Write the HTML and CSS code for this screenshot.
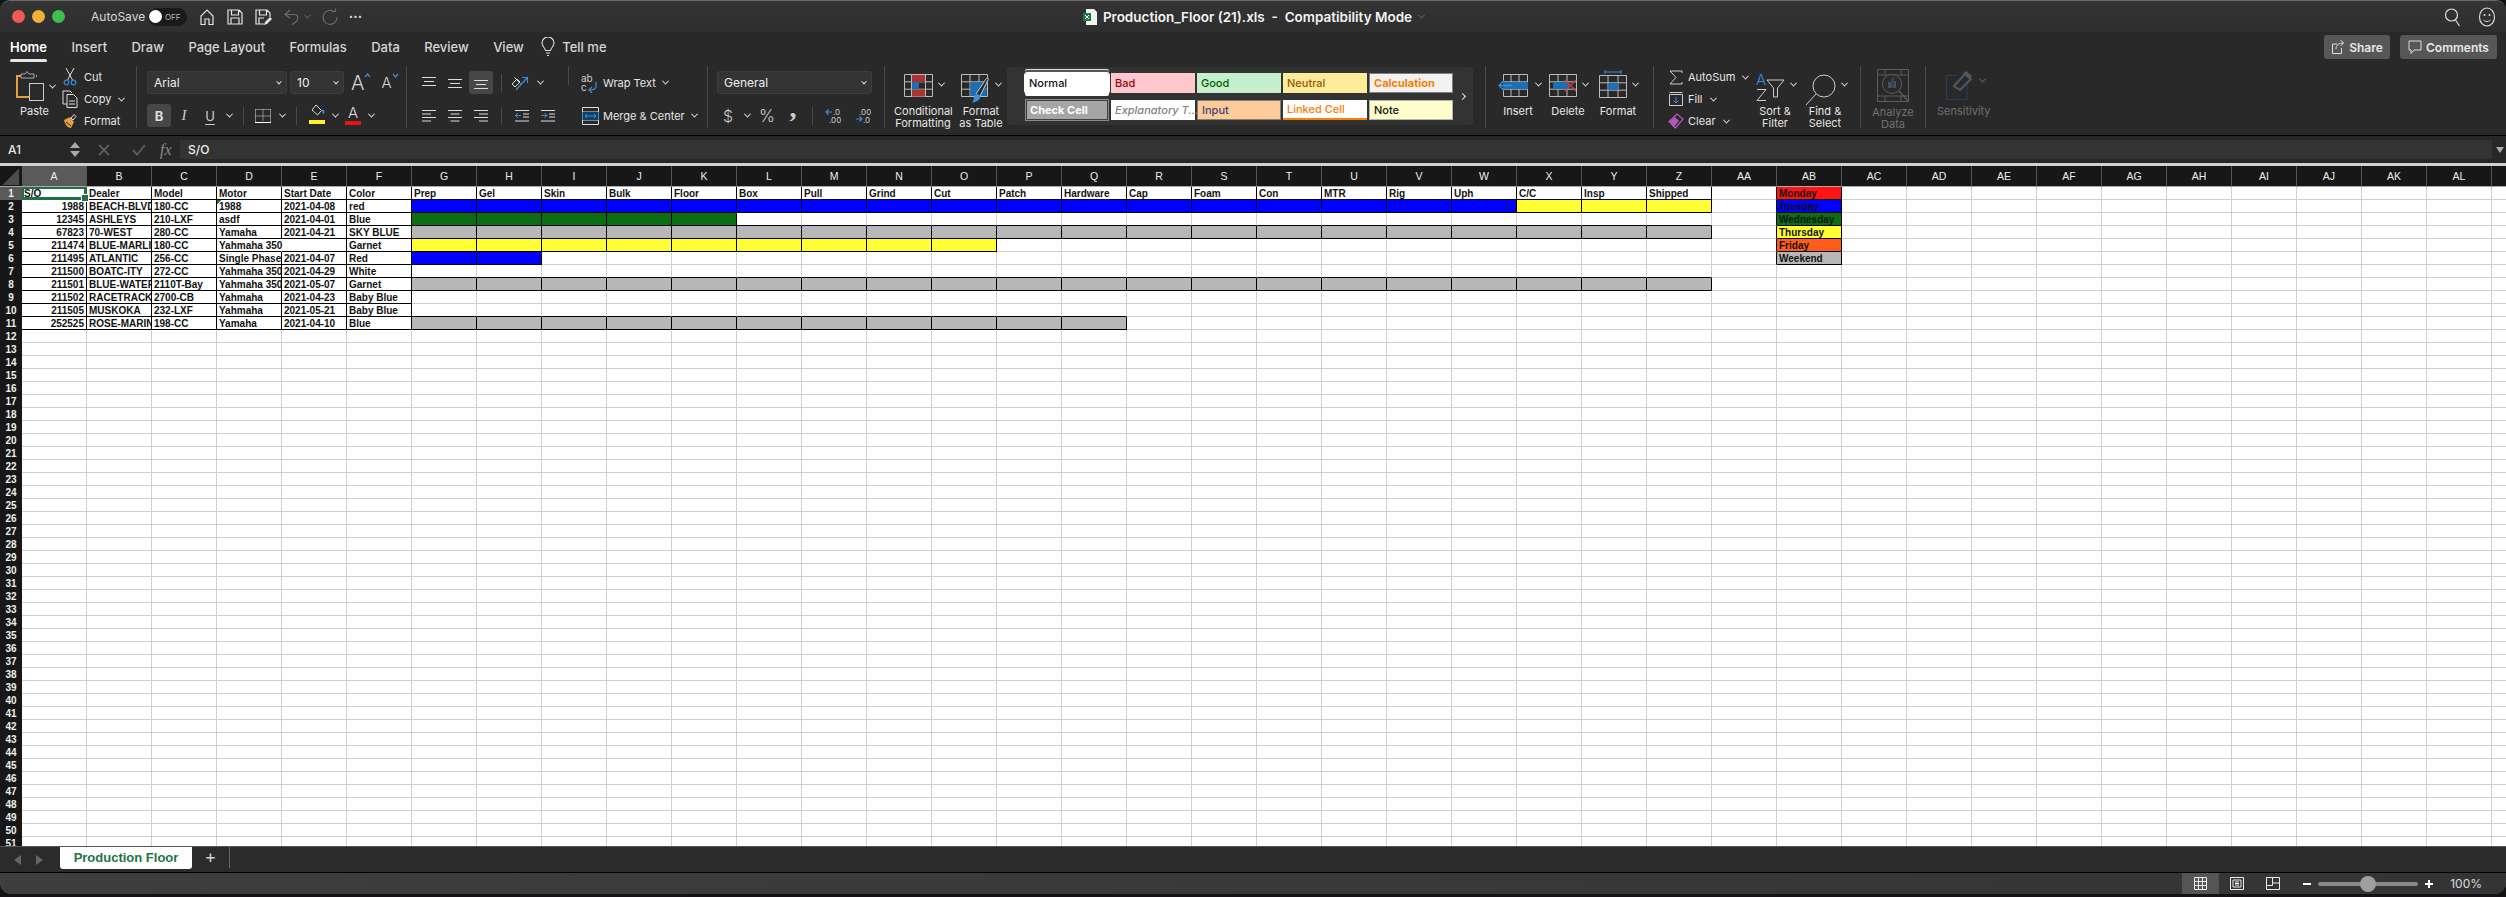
FILE: index.html
```html
<!DOCTYPE html>
<html lang="en">
<head>
  <meta charset="UTF-8">
  <title>Production_Floor (21).xls - Compatibility Mode</title>
  <link rel="stylesheet" href="styles.css">
  <script src="script.js" defer></script>
</head>
<body>
  <div class="window">

    <!-- title bar -->
    <header class="titlebar">
      <div class="title-left">
        <span class="light red"></span><span class="light amber"></span><span class="light green"></span>
        <span class="autosave">AutoSave</span>
        <span class="toggle"><i></i>OFF</span>
        <svg class="qa" width="18" height="18" viewBox="0 0 18 18"><path d="M3 16.500V8L9 2l6 6v8.500h-4V11H7v5.500z" fill="none" stroke="#e4e4e4" stroke-width="1.200"/></svg>
        <svg class="qa" width="18" height="18" viewBox="0 0 18 18"><path d="M2 2h11l3 3v11H2zM5.500 2v5h7V2M5 16v-6h8v6" fill="none" stroke="#e4e4e4" stroke-width="1.200"/></svg>
        <svg class="qa" width="18" height="18" viewBox="0 0 18 18"><path d="M10 16H2V2h11l3 3v4M5.500 2v5h7V2M5 16v-6h5" fill="none" stroke="#e4e4e4" stroke-width="1.200"/><path d="M10 17l1-3 5-5 2 2-5 5z" fill="#e4e4e4"/></svg>
        <svg class="qa undo" width="18" height="18" viewBox="0 0 18 18"><path d="M7 2L2 6.500 7 10M2.500 6.500H11c6 0 4.500 7-2 10" fill="none" stroke="#6b6b6b" stroke-width="1.200"/></svg>
        <span class="chev dim"></span>
        <svg class="qa redo" width="18" height="18" viewBox="0 0 18 18"><path d="M13.500 4A7 7 0 1 0 16 9M10.500 3.500h4v-3" fill="none" stroke="#6b6b6b" stroke-width="1.200"/></svg>
        <span class="dots">•••</span>
      </div>
      <div class="title-mid">
        <svg width="16" height="18" viewBox="0 0 16 18"><path d="M4 1h8l3 3v13H4z" fill="#f2f2f2"/><rect x="1" y="5" width="8" height="8" fill="#1d7a45"/><path d="M3 7l4 4M7 7l-4 4" stroke="#fff"/></svg>
        <span class="doc">Production_Floor (21).xls&nbsp; - &nbsp;Compatibility Mode</span>
        <span class="chev dim"></span>
      </div>
      <div class="title-right">
        <svg width="18" height="20" viewBox="0 0 18 20"><circle cx="7.500" cy="8" r="6" fill="none" stroke="#ddd" stroke-width="1.200"/><path d="M11.500 13l4 6" stroke="#ddd" stroke-width="1.200"/></svg>
        <svg width="18" height="22" viewBox="0 0 18 22"><ellipse cx="9" cy="11" rx="7.500" ry="9" fill="none" stroke="#ddd" stroke-width="1.200"/><circle cx="6.500" cy="9" r="1" fill="#ddd"/><circle cx="11.500" cy="9" r="1" fill="#ddd"/><path d="M5.500 14c2 2 5 2 7 0" fill="none" stroke="#ddd"/></svg>
      </div>
    </header>

    <!-- ribbon tabs -->
    <nav class="tabs">
      <span class="tab active">Home</span>
      <span class="tab">Insert</span>
      <span class="tab">Draw</span>
      <span class="tab">Page Layout</span>
      <span class="tab">Formulas</span>
      <span class="tab">Data</span>
      <span class="tab">Review</span>
      <span class="tab">View</span>
      <span class="tell">
        <svg width="14" height="20" viewBox="0 0 14 20"><path d="M4.500 13.500C4 10.500 1 9.500 1 6a6 6 0 0 1 12 0c0 3.500-3 4.500-3.500 7.500zM5 16h4M6 18.500h2" fill="none" stroke="#ddd" stroke-width="1.100"/></svg>
        Tell me
      </span>
      <span class="tab-actions">
        <button class="act share"><svg width="14" height="16" viewBox="0 0 14 16"><path d="M6 5H1.500v9.500h9V9M5 10c0-4 3-6 7.500-6M9.500 1l3 3-3 3" fill="none" stroke="#ddd"/></svg>Share</button>
        <button class="act comments"><svg width="14" height="16" viewBox="0 0 14 16"><path d="M1 2h12v9H6l-3 3.500V11H1z" fill="none" stroke="#ddd"/></svg>Comments</button>
      </span>
    </nav>

    <!-- ribbon -->
    <section class="ribbon">

      <div class="group g-clip">
        <div class="paste">
          <div class="paste-top">
            <svg width="30" height="31" viewBox="0 0 30 31"><path d="M5 5H1v21h13" fill="none" stroke="#e59f3e" stroke-width="2"/><path d="M21 5h-1" stroke="#e59f3e" stroke-width="2"/><path d="M5 7V3h4l2-2.500L13 3h5v4z" fill="#2a2a2a" stroke="#aaa"/><rect x="13.500" y="12.500" width="14" height="17" fill="#2a2a2a" stroke="#ccc"/></svg>
            <span class="chev"></span>
          </div>
          <span class="lbl">Paste</span>
        </div>
        <div class="clip-list">
          <div class="line"><svg width="16" height="18" viewBox="0 0 16 18"><path d="M4 0l6.500 12M12 0L5.500 12" stroke="#ddd" fill="none"/><circle cx="4.500" cy="14.500" r="2.300" fill="none" stroke="#2f87d0" stroke-width="1.300"/><circle cx="11.500" cy="14.500" r="2.300" fill="none" stroke="#2f87d0" stroke-width="1.300"/></svg><span>Cut</span></div>
          <div class="line"><svg width="16" height="18" viewBox="0 0 16 18"><path d="M5 14H1V1h7l2 2" fill="none" stroke="#ddd"/><path d="M5 4.500h6.500l3.500 3.500v9.500H5zM7 11h6M7 14h6" fill="#2a2a2a" stroke="#ddd"/></svg><span>Copy</span><span class="chev"></span></div>
          <div class="line"><svg width="16" height="16" viewBox="0 0 16 16"><path d="M9 5l3-3.500 2 2L11 7z" fill="none" stroke="#ddd"/><path d="M2 7l6-3 4 5-3 6c-3 0-6-3-7-8z" fill="#e59f3e"/><path d="M4 9l5 4" stroke="#2a2a2a"/></svg><span>Format</span></div>
        </div>
      </div>
      <i class="sep"></i>

      <div class="group g-font">
        <div class="row r1">
          <div class="box font-name">Arial<span class="chev"></span></div>
          <div class="box font-size">10<span class="chev"></span></div>
          <span class="grow"><b class="big">A</b><svg width="7" height="5" viewBox="0 0 7 5"><path d="M1 4l2.500-3L6 4" fill="none" stroke="#3a8fd6" stroke-width="1.200"/></svg></span>
          <span class="grow small"><b class="big">A</b><svg width="7" height="5" viewBox="0 0 7 5"><path d="M1 1l2.500 3L6 1" fill="none" stroke="#3a8fd6" stroke-width="1.200"/></svg></span>
        </div>
        <div class="row r2">
          <span class="tool on bold-btn">B</span>
          <span class="tool ital">I</span>
          <span class="tool under">U</span>
          <span class="chev-slot"><span class="chev"></span></span>
          <i class="isep m8"></i>
          <span class="tool ml6"><svg width="16" height="14" viewBox="0 0 16 14"><path d="M.500.500h15M.500.500v13M15.500.500v13M8 .500v12M.500 7h15" fill="none" stroke="#ddd" stroke-dasharray="1 1"/><path d="M0 13.500h16" stroke="#fff"/></svg></span>
          <span class="chev-slot"><span class="chev"></span></span>
          <i class="isep m8"></i>
          <span class="tool ml7 paint"><svg width="16" height="15" viewBox="0 0 16 15"><path d="M7 1l5.500 5.500-4 4.500-5.500-5z" fill="none" stroke="#ddd"/><path d="M13 6c2-1 3 3 1 4" fill="#3a8fd6" stroke="#3a8fd6"/></svg><i class="swatch y"></i></span>
          <span class="chev-slot n"><span class="chev"></span></span>
          <span class="tool paint letter">A<i class="swatch r"></i></span>
          <span class="chev-slot n"><span class="chev"></span></span>
        </div>
      </div>
      <i class="sep"></i>

      <div class="group g-align">
        <div class="row r1">
          <span class="tool"><svg class="lines" width="14" height="12" viewBox="0 0 14 12"><path d="M0 .500h14M2 4.500h10M0 8.500h14"/></svg></span>
          <span class="tool"><svg class="lines" width="14" height="12" viewBox="0 0 14 12"><path d="M0 2.500h14M2 6.500h10M0 10.500h14"/></svg></span>
          <span class="tool on ml1 w24"><svg class="lines" width="14" height="12" viewBox="0 0 14 12"><path d="M0 3.500h14M2 7.500h10M0 11.500h14"/></svg></span>
          <i class="isep m8"></i>
          <span class="tool ml6 w24"><svg width="18" height="16" viewBox="0 0 18 16"><path d="M1 9l5-5 3 3-5 5zM3.500 2.500l6 6" fill="none" stroke="#ddd"/><path d="M5 15L16 3M11 2.500h5.500V8" fill="none" stroke="#3a8fd6" stroke-width="1.200"/></svg></span>
          <span class="chev-slot ml2"><span class="chev"></span></span>
          <i class="isep short"></i>
          <span class="mini ml11"><svg width="20" height="20" viewBox="0 0 20 20"><text x="1" y="9" class="ab">ab</text><text x="1" y="18" class="ab">c</text><path d="M16 9v4c0 3-3 4-6 4M12 14l-3 3 3 3" fill="none" stroke="#3a8fd6" stroke-width="1.200"/></svg></span>
          <span class="txt">Wrap Text</span><span class="chev"></span>
        </div>
        <div class="row r2">
          <span class="tool"><svg class="lines" width="14" height="12" viewBox="0 0 14 12"><path d="M0 .500h14M0 4h9M0 7.500h14M0 11h9"/></svg></span>
          <span class="tool"><svg class="lines" width="14" height="12" viewBox="0 0 14 12"><path d="M0 .500h14M2.500 4h9M0 7.500h14M2.500 11h9"/></svg></span>
          <span class="tool"><svg class="lines" width="14" height="12" viewBox="0 0 14 12"><path d="M0 .500h14M5 4h9M0 7.500h14M5 11h9"/></svg></span>
          <i class="isep m7"></i>
          <span class="tool ml7"><svg width="14" height="12" viewBox="0 0 14 12"><path class="blue" d="M0 5.500h6M3 3L.500 5.500 3 8"/><path class="wht" d="M0 .500h14M8 4h6M8 7h6M0 11h14"/></svg></span>
          <span class="tool"><svg width="14" height="12" viewBox="0 0 14 12"><path class="blue" d="M0 5.500h6M3.500 3L6 5.500 3.500 8"/><path class="wht" d="M0 .500h14M8 4h6M8 7h6M0 11h14"/></svg></span>
          <span class="mini ml19"><svg width="17" height="18" viewBox="0 0 17 18"><path d="M.500.500h16v17H.500zM.500 5h16M.500 13h16" fill="none" stroke="#ddd"/><rect x="1" y="5" width="15" height="8" fill="#123f66"/><path d="M.500 5v8M16.500 5v8M3 9h11M5 7L3 9l2 2M12 7l2 2-2 2" fill="none" stroke="#3a8fd6"/></svg></span>
          <span class="txt ml3">Merge &amp; Center</span><span class="chev"></span>
        </div>
      </div>
      <i class="sep"></i>

      <div class="group g-num">
        <div class="row r1">
          <div class="box num-fmt">General<span class="chev"></span></div>
        </div>
        <div class="row r2">
          <span class="sym dollar">$</span>
          <span class="chev-slot ml3"><span class="chev"></span></span>
          <span class="sym pct">%</span>
          <span class="sym comma">,</span>
          <i class="isep m9"></i>
          <span class="tool dec ml7"><svg width="16" height="15" viewBox="0 0 16 15"><path d="M7 4H1M3.500 1.500L1 4l2.500 2.500" fill="none" stroke="#3a8fd6" stroke-width="1.100"/><text x="8" y="7" class="digits">.0</text><text x="4" y="14.500" class="digits">.00</text></svg></span>
          <span class="tool dec ml4"><svg width="16" height="15" viewBox="0 0 16 15"><text x="4" y="6.500" class="digits">.00</text><text x="8" y="14.500" class="digits">.0</text><path d="M1 11h6M4.500 8.500L7 11l-2.500 2.500" fill="none" stroke="#3a8fd6" stroke-width="1.100"/></svg></span>
        </div>
      </div>
      <i class="sep"></i>

      <div class="group g-styles">
        <div class="bigbtn w58 pl10">
          <div class="bigtop"><svg width="29" height="23" viewBox="0 0 29 23"><path d="M.500.500h28v22H.500zM.500 7.800h28M.500 15.200h28M7.500.500v22M14.500.500v22M21.500.500v22" fill="none" stroke="#bbb"/><rect x="8" y="1" width="13" height="7" fill="#a93232"/><rect x="8" y="8" width="7" height="7" fill="#1d6fb5"/><rect x="8" y="15.500" width="13" height="7" fill="#a93232"/></svg><span class="chev"></span></div>
          <span class="lbl">Conditional<br>Formatting</span>
        </div>
        <div class="bigbtn w50 pl5 tbl">
          <div class="bigtop"><svg width="29" height="30" viewBox="0 0 29 30"><path d="M.500.500h26v22H.500zM.500 7.800h26M.500 15.200h26M9 .500v22M18 .500v22" fill="none" stroke="#bbb"/><rect x="9.500" y="8" width="16" height="14" fill="#1d6fb5"/><path d="M15 20L25 5c1-2 3-1 2 1L19 22" fill="#2a2a2a" stroke="#ccc"/><path d="M14 21c3-2 6 0 5 3-1 3-5 4-8 5 2-2 1-5 3-8z" fill="#3a8fd6"/></svg><span class="chev"></span></div>
          <span class="lbl">Format<br>as Table</span>
        </div>
        <div class="gallery">
          <div class="cells">
            <span class="st normal">Normal</span>
            <span class="st bad">Bad</span>
            <span class="st good">Good</span>
            <span class="st neutral">Neutral</span>
            <span class="st calc">Calculation</span>
            <span class="st check"><em>Check Cell</em></span>
            <span class="st expl">Explanatory T...</span>
            <span class="st input">Input</span>
            <span class="st linked">Linked Cell</span>
            <span class="st note">Note</span>
          </div>
          <span class="chev side"></span>
        </div>
      </div>
      <i class="sep"></i>

      <div class="group g-cells">
        <div class="bigbtn w50 pl5">
          <div class="bigtop"><svg width="32" height="23" viewBox="0 0 32 23"><path d="M5.500.500h24v22h-24zM5.500 7.800h24M5.500 15.200h24M13 .500v22M21 .500v22" fill="none" stroke="#bbb"/><rect x="5" y="8" width="25" height="7" fill="#1d6fb5"/><path d="M14 11.500H1M6 6.500l-5 5 5 5" fill="none" stroke="#3a8fd6" stroke-width="1.300"/></svg><span class="chev"></span></div>
          <span class="lbl">Insert</span>
        </div>
        <div class="bigbtn w50 pl6">
          <div class="bigtop"><svg width="28" height="23" viewBox="0 0 28 23"><path d="M.500.500h27v22H.500zM.500 7.800h27M.500 15.200h27M9 .500v22M18 .500v22" fill="none" stroke="#bbb"/><rect x="4" y="8" width="16" height="7" fill="#1d6fb5"/><path d="M16 6l11 11M27 6L16 17" stroke="#d33b3b" stroke-width="1.300"/></svg><span class="chev"></span></div>
          <span class="lbl">Delete</span>
        </div>
        <div class="bigbtn w50 pl6">
          <div class="bigtop shift"><svg width="28" height="29" viewBox="0 0 28 29"><path d="M6 1v4M22 1v4M6 3h16" stroke="#3a8fd6" fill="none"/><path d="M.500 6.500h27v22H.500zM.500 13.800h27M.500 21.200h27M9 6.500v22M19 6.500v22" fill="none" stroke="#bbb"/><rect x="9.500" y="14" width="9.500" height="7" fill="#1d6fb5"/></svg><span class="chev"></span></div>
          <span class="lbl">Format</span>
        </div>
      </div>
      <i class="sep"></i>

      <div class="group g-edit">
        <div class="edit-list">
          <div class="line"><svg width="14" height="15" viewBox="0 0 14 15"><path d="M13 3V1H1l6 6.500L1 14h12v-2" fill="none" stroke="#ccc"/></svg><span>AutoSum</span><span class="chev"></span></div>
          <div class="line"><svg width="14" height="14" viewBox="0 0 14 14"><path d="M.500 2.500h13v11H.500zM.500 .500h13" fill="none" stroke="#ccc"/><path d="M7 5v6M4.500 8.500L7 11l2.500-2.500" fill="none" stroke="#3a8fd6"/></svg><span>Fill</span><span class="chev"></span></div>
          <div class="line"><svg width="16" height="16" viewBox="0 0 16 16"><path d="M1 8.500L9 1l6 5-7.500 9z" fill="none" stroke="#b556b8" stroke-width="1.200"/><path d="M1.500 8.500l4 6 5.500-6.500-4-4z" fill="#b556b8"/></svg><span>Clear</span><span class="chev"></span></div>
        </div>
        <div class="bigbtn w46 pl4">
          <div class="bigtop"><svg width="29" height="28" viewBox="0 0 29 28"><text x="0" y="11" class="sort-a">A</text><path d="M1 15.500h9L1 26.500h9" fill="none" stroke="#ccc"/><path d="M11 6h17l-6.500 8v9h-4v-9z" fill="none" stroke="#ccc"/></svg><span class="chev"></span></div>
          <span class="lbl">Sort &amp;<br>Filter</span>
        </div>
        <div class="bigbtn w54 pl7">
          <div class="bigtop"><svg width="31" height="32" viewBox="0 0 31 32"><circle cx="19" cy="12" r="11" fill="none" stroke="#ccc"/><path d="M11 20L1 31" stroke="#ccc"/></svg><span class="chev"></span></div>
          <span class="lbl">Find &amp;<br>Select</span>
        </div>
      </div>
      <i class="sep"></i>

      <div class="group g-analyze">
        <svg class="ana" width="32" height="33" viewBox="0 0 32 33"><path d="M.500.500h31v32H.500zM.500 6h31M.500 27h31M8 .500v6M24 .500v6M8 27v5.500M24 27v5.500" fill="none" stroke="#5d5d5d"/><circle cx="15" cy="15" r="9.500" fill="#2a2a2a" stroke="#5d5d5d"/><rect x="11" y="13" width="3" height="6" fill="#4f4f4f"/><rect x="14" y="9" width="3" height="10" fill="#24486a"/><rect x="17" y="12" width="2" height="7" fill="#4f4f4f"/><path d="M22 22l9 10" stroke="#5d5d5d" stroke-width="1.300"/></svg>
        <span class="lbl off">Analyze<br>Data</span>
      </div>
      <i class="sep"></i>

      <div class="group g-sens">
        <div class="bigbtn w52 pl9">
          <div class="bigtop shift2"><svg width="28" height="30" viewBox="0 0 28 30"><path d="M21 15v14.500H.500V5.500H11" fill="none" stroke="#22445f"/><path d="M8 16l11-12 6 5-11 11z" fill="none" stroke="#4c5962" stroke-width="2"/><path d="M17 4l3-3 6 5-3 3" fill="#4c5962"/></svg><span class="chev dim"></span></div>
          <span class="lbl off">Sensitivity</span>
        </div>
      </div>
    </section>

    <!-- formula bar -->
    <div class="formula">
      <span class="namebox">A1</span>
      <span class="stepper"><i class="up"></i><i class="dn"></i></span>
      <span class="fbtn"><svg width="12" height="12" viewBox="0 0 12 12"><path d="M1 1l10 10M11 1L1 11" stroke="#5d5d5d" stroke-width="1.800"/></svg></span>
      <span class="fbtn w30"><svg width="14" height="12" viewBox="0 0 14 12"><path d="M1 6l4 4.500L13 1" fill="none" stroke="#5d5d5d" stroke-width="1.800"/></svg></span>
      <span class="fx">fx</span>
      <div class="ffield">S/O</div>
      <i class="fmore"></i>
    </div>

    <!-- sheet, cells are built in script.js -->
    <div class="sheet"><div class="grid" id="grid"></div></div>

    <!-- sheet tabs -->
    <div class="sheetbar">
      <span class="nav"><i class="left"></i><i class="right"></i></span>
      <span class="sheet-tab">Production Floor</span>
      <span class="add">+</span>
    </div>

    <!-- status bar -->
    <footer class="status">
      <span class="view on"><svg width="13" height="13" viewBox="0 0 13 13"><path d="M.500.500h12v12H.500zM.500 4.500h12M.500 8.500h12M4.500.500v12M8.500.500v12" fill="none" stroke="#eee"/></svg></span>
      <span class="view"><svg width="14" height="13" viewBox="0 0 14 13"><path d="M.500.500h13v12H.500zM3 3h8v7H3zM5 5h4M5 6.500h4M5 8h4" fill="none" stroke="#eee"/></svg></span>
      <span class="view"><svg width="14" height="13" viewBox="0 0 14 13"><path d="M.500.500h13v12H.500zM.500 8.500h6V.500M6.500 6h7" fill="none" stroke="#eee"/></svg></span>
      <span class="zoom-btn minus"></span>
      <span class="slider"><i></i></span>
      <span class="zoom-btn plus"></span>
      <span class="pct-val">100%</span>
    </footer>
  </div>
</body>
</html>
```

FILE: styles.css
```css
* {
  box-sizing: border-box;
}
html, body {
  margin: 0;
  height: 897px;
  overflow: hidden;
  background: #141216;
}
body {
  font-family: "Inter", "Liberation Sans", sans-serif;
  color: #e6e6e6;
}
.window {
  width: 2506px;
  height: 894px;
  display: flex;
  flex-direction: column;
  overflow: hidden;
  border-radius: 10px 10px 11px 11px;
  background: #292929;
  border-top: 1px solid #6a6a6a;
}
svg {
  display: block;
  flex: none;
}

/* chevron used all over the ribbon */
.chev {
  display: inline-block;
  flex: none;
  width: 5px;
  height: 5px;
  border-right: 1.5px solid #e6e6e6;
  border-bottom: 1.5px solid #e6e6e6;
  transform: rotate(45deg) translate(-1px, -1px);
}
.chev.dim {
  border-color: #666;
}
.chev-slot {
  width: 12px;
  display: flex;
  justify-content: center;
  flex: none;
}
.chev-slot.n {
  width: 10px;
}

/* title bar */
.titlebar {
  height: 31px;
  flex: none;
  display: grid;
  grid-template-columns: 1fr auto 1fr;
  align-items: center;
  background: linear-gradient(#343434, #2e2e2e);
}
.title-left {
  display: flex;
  align-items: center;
  padding-left: 12px;
}
.light {
  width: 13px;
  height: 13px;
  border-radius: 50%;
  margin-right: 7px;
}
.light.red { background: #ee5a55; }
.light.amber { background: #f0b03a; }
.light.green { background: #3cbf4b; }
.autosave {
  margin-left: 19px;
  font-size: 12px;
  color: #d8d8d8;
  width: 57px;
}
.toggle {
  width: 39px;
  height: 18px;
  border-radius: 9px;
  background: #1a1a1a;
  display: flex;
  align-items: center;
  font-size: 8px;
  color: #b5b5b5;
}
.toggle i {
  width: 13px;
  height: 13px;
  border-radius: 50%;
  background: #fff;
  margin: 0 3px 0 1px;
}
.qa {
  margin-left: 10px;
}
.title-left .qa:first-of-type {
  margin-left: 11px;
}
.qa.undo {
  margin-left: 11px;
}
.title-left .chev.dim {
  margin-left: 4px;
  border-width: 1.2px;
}
.qa.redo {
  margin-left: 11px;
}
.dots {
  margin-left: 10px;
  font-size: 7px;
  letter-spacing: 0.5px;
  color: #ddd;
}
.title-mid {
  display: flex;
  align-items: center;
  gap: 5px;
}
.doc {
  font-size: 13.500px;
  font-weight: 600;
  color: #f4f4f4;
  white-space: pre;
}
.title-mid .chev {
  margin-left: 2px;
}
.title-right {
  display: flex;
  justify-content: flex-end;
  align-items: center;
  gap: 16px;
  padding-right: 10px;
}

/* tabs */
.tabs {
  height: 30px;
  flex: none;
  display: flex;
  align-items: center;
  padding: 0 9px 0 10px;
  gap: 24.4px;
  background: #292929;
  font-size: 13px;
  font-weight: 500;
  color: #d6d6d6;
}
.tab {
  position: relative;
  line-height: 28px;
}
.tab.active {
  color: #fff;
  font-weight: 600;
}
.tab.active::after {
  content: "";
  display: block;
  height: 3px;
  border-radius: 2px;
  background: #e6e6e6;
  margin-top: -2px;
}
.tell {
  display: flex;
  align-items: center;
  gap: 7px;
  margin-left: -7px;
}
.tab-actions {
  margin-left: auto;
  display: flex;
  gap: 10px;
  margin-right: 0;
}
.act {
  height: 24px;
  border: 0;
  border-radius: 3px;
  background: #575757;
  color: #e8e8e8;
  font: 600 12px "Inter", sans-serif;
  display: flex;
  align-items: center;
  justify-content: center;
  gap: 4px;
  padding: 0;
}
.act.share { width: 66px; }
.act.comments { width: 97px; }

/* ribbon */
.ribbon {
  height: 74px;
  flex: none;
  display: flex;
  background: #292929;
  border-bottom: 1px solid #000;
  font-size: 11px;
}
.group {
  flex: none;
  display: flex;
  height: 73px;
}
.sep {
  flex: none;
  width: 1px;
  height: 62px;
  margin-top: 4px;
  background: #4a4a4a;
}
.isep {
  flex: none;
  width: 1px;
  height: 18px;
  background: #4a4a4a;
}
.isep.m8 { margin: 0 0 0 8px; }
.isep.m7 { margin: 0 0 0 7px; }
.isep.m9 { margin: 0 0 0 9px; }
.isep.short {
  margin: -5px 0 0 22px;
  height: 19px;
  align-self: flex-start;
}
.ml1 { margin-left: 1px; }
.ml2 { margin-left: 2px; }
.ml3 { margin-left: 3px; }
.ml4 { margin-left: 4px; }
.ml6 { margin-left: 6px; }
.ml7 { margin-left: 7px; }
.ml11 { margin-left: 11px; }
.ml19 { margin-left: 19px; }
.lbl {
  display: block;
  line-height: 12px;
  text-align: center;
  color: #e6e6e6;
  white-space: nowrap;
}
.lbl.off {
  color: #707070;
}
.line {
  height: 22px;
  display: flex;
  align-items: center;
  font-size: 11px;
  white-space: nowrap;
}

/* clipboard */
.g-clip {
  width: 136px;
}
.paste {
  width: 56px;
  padding: 9px 0 0 16px;
}
.paste-top {
  height: 34px;
  display: flex;
  align-items: flex-start;
}
.paste-top .chev {
  margin: 13px 0 0 4px;
}
.paste .lbl {
  width: 37px;
  line-height: 12px;
  margin-top: 0;
}
.clip-list {
  padding-top: 4px;
}
.clip-list svg {
  margin: 0 6px 0 6px;
}
.clip-list .chev {
  margin-left: 8px;
}

/* rows of the small ribbon controls */
.row {
  display: flex;
  align-items: center;
  height: 23px;
}
.row.r1 {
  margin-top: 9px;
}
.row.r2 {
  margin-top: 10px;
}
.group.g-font,
.group.g-align,
.group.g-num {
  flex-direction: column;
}
.g-font {
  width: 269px;
  padding-left: 10px;
}
.box {
  height: 23px;
  background: #343434;
  border: 1px solid #3d3d3d;
  border-radius: 3px;
  display: flex;
  align-items: center;
  justify-content: space-between;
  padding: 0 5px 0 6px;
  font-size: 12px;
  color: #eee;
}
.box .chev {
  width: 4px;
  height: 4px;
  border-width: 1.2px;
}
.font-name { width: 140px; }
.font-size { width: 54px; margin-left: 3px; }
.grow {
  display: flex;
  align-items: flex-start;
  margin-left: 7px;
}
.grow.small {
  margin-left: 10px;
}
.big {
  font-weight: 300;
  font-size: 20px;
  line-height: 20px;
  color: #d5d5d5;
}
.small .big {
  font-size: 15px;
}
.tool {
  flex: none;
  width: 26px;
  height: 23px;
  display: flex;
  align-items: center;
  justify-content: center;
  border-radius: 3px;
}
.tool.on {
  background: #474747;
}
.w24 {
  width: 24px;
}
.bold-btn {
  width: 24px;
  font-weight: 700;
  font-size: 13px;
  color: #ddd;
}
.ital {
  font: italic 15px "Liberation Serif", serif;
  color: #ccc;
}
.under {
  font-size: 13px;
  text-decoration: underline;
  text-underline-offset: 3px;
  color: #ccc;
}
.paint {
  position: relative;
  flex-direction: column;
  justify-content: flex-start;
}
.letter {
  font-size: 15px;
  line-height: 15px;
  font-weight: 300;
  color: #ddd;
  padding-top: 1px;
}
.swatch {
  width: 16px;
  height: 4px;
  margin-top: 1px;
}
.swatch.y { background: #fff12a; }
.swatch.r { background: #e6141a; }
.lines path {
  fill: none;
  stroke: #dcdcdc;
}
.blue {
  fill: none;
  stroke: #3a8fd6;
}
.wht {
  fill: none;
  stroke: #dcdcdc;
}

/* alignment */
.g-align {
  width: 300px;
  padding-left: 9px;
}
.mini {
  flex: none;
  width: 20px;
  display: flex;
  justify-content: center;
}
.ab {
  font-size: 10px;
  fill: #ccc;
}
.txt {
  font-size: 11px;
  white-space: nowrap;
  margin: 0 7px 0 3px;
}

/* number */
.g-num {
  width: 176px;
  padding-left: 9px;
}
.num-fmt { width: 155px; }
.sym {
  flex: none;
  text-align: center;
  color: #ccc;
  font-weight: 300;
}
.dollar {
  width: 20px;
  font-size: 16px;
  margin-left: 1px;
}
.pct {
  width: 24px;
  font-size: 17px;
  margin-left: 2px;
}
.comma {
  width: 20px;
  font: 700 28px/12px "Liberation Serif", serif;
  transform: translateY(-8px);
  margin-left: 4px;
}
.digits {
  font-size: 8px;
  fill: #ccc;
}

/* big buttons */
.bigbtn {
  flex: none;
  padding-top: 12px;
}
.bigtop {
  height: 31px;
  display: flex;
  align-items: flex-start;
  gap: 6px;
}
.bigtop .chev {
  margin-top: 8px;
}
.bigtop.shift {
  margin-top: -5px;
  height: 36px;
}
.bigtop.shift .chev {
  margin-top: 13px;
}
.bigtop.shift2 {
  margin-top: -4px;
  height: 35px;
}
.w46 { width: 46px; }
.w50 { width: 50px; }
.w52 { width: 52px; }
.w54 { width: 54px; }
.w58 { width: 58px; }
.pl4 { padding-left: 4px; }
.pl5 { padding-left: 5px; }
.pl6 { padding-left: 6px; }
.pl7 { padding-left: 7px; }
.pl9 { padding-left: 9px; }
.pl10 { padding-left: 10px; }
.pl4 .lbl { margin-left: -4px; }
.pl5 .lbl { margin-left: -5px; }
.pl6 .lbl { margin-left: -6px; }
.pl7 .lbl { margin-left: -7px; }
.pl9 .lbl { margin-left: -9px; }
.pl10 .lbl { margin-left: -10px; }

/* cell styles */
.g-styles {
  width: 600px;
  padding-left: 9px;
}
.bigbtn.tbl {
  margin-left: 4px;
}
.gallery {
  width: 466px;
  height: 58px;
  margin: 5px 0 0 1px;
  background: #333;
  border-radius: 3px;
  display: flex;
  align-items: center;
  padding-left: 18px;
}
.cells {
  display: grid;
  grid-template-columns: repeat(5, 84px);
  grid-auto-rows: 20px;
  column-gap: 2px;
  row-gap: 7px;
}
.st {
  display: flex;
  align-items: center;
  padding-left: 4px;
  font-size: 11px;
  white-space: nowrap;
  font-weight: 500;
}
.normal {
  background: #fff;
  color: #111;
  outline: 1px solid #fff;
  box-shadow: 0 -3px 0 #555, 0 -4px 0 #ddd, 0 3px 0 #fff;
  border-radius: 2px;
}
.bad { background: #ffc7ce; color: #9c0006; }
.good { background: #c6efce; color: #006100; }
.neutral { background: #ffeb9c; color: #9c5700; }
.calc { background: #f2f2f2; color: #fa7d00; border: 1px solid #7f7f7f; font-weight: 700; }
.check { background: #333; padding: 0; }
.check em {
  display: flex;
  align-items: center;
  padding-left: 3px;
  margin-left: 1px;
  width: 82px;
  height: 100%;
  background: #a5a5a5;
  border: 1px solid #3f3f3f;
  outline: 1px solid #8a8a8a;
  font-style: normal;
  font-weight: 700;
  color: #fff;
}
.expl { background: #fff; color: #7f7f7f; font-style: italic; }
.input { background: #ffcc99; color: #3f3f76; border: 1px solid #7f7f7f; }
.linked { background: #fff; color: #fa7d00; border-bottom: 2px solid #ff8001; }
.note { background: #ffffcc; color: #111; border: 1px solid #b2b2b2; }
.chev.side {
  margin: 0 0 0 7px;
  transform: rotate(-45deg);
  width: 5px;
  height: 5px;
}

/* cells + editing */
.g-cells {
  width: 167px;
  padding-left: 7px;
}
.g-edit {
  width: 206px;
  padding-left: 11px;
}
.edit-list {
  width: 87px;
  flex: none;
  padding-top: 4px;
}
.edit-list svg {
  margin: 0 4px 0 3px;
  width: 16px;
}
.edit-list .chev {
  margin-left: 8px;
}
.sort-a {
  font-size: 15px;
  font-weight: 300;
  fill: #3a8fd6;
}
.g-analyze {
  width: 64px;
  flex-direction: column;
  align-items: center;
  padding-top: 7px;
}
.g-analyze .lbl {
  margin-top: 4px;
}
.g-sens {
  padding-left: 11px;
}

/* formula bar */
.formula {
  height: 30px;
  flex: none;
  display: flex;
  align-items: center;
  background: #272727;
  border-bottom: 3px solid;
  border-image: linear-gradient(#555 0 1px, #d0d0d0 1px 3px) 3;
  font-size: 12px;
}
.namebox {
  width: 66px;
  padding-left: 8px;
  color: #e8e8e8;
  font-weight: 500;
}
.stepper {
  width: 18px;
  display: flex;
  flex-direction: column;
  align-items: center;
  gap: 3px;
}
.stepper i {
  width: 0;
  height: 0;
  border-left: 5px solid transparent;
  border-right: 5px solid transparent;
}
.stepper .up { border-bottom: 6px solid #aaa; }
.stepper .dn { border-top: 6px solid #aaa; }
.fbtn {
  width: 20px;
  display: flex;
  justify-content: flex-end;
  margin-left: 6px;
}
.fbtn.w30 {
  width: 30px;
}
.fx {
  width: 22px;
  margin-left: 14px;
  font: italic 16px "Liberation Serif", serif;
  color: #8a8a8a;
}
.ffield {
  width: 2312px;
  height: 19px;
  margin-left: -2px;
  padding-left: 8px;
  line-height: 19px;
  background: #333;
  color: #eee;
  font-weight: 500;
}
.fmore {
  width: 0;
  height: 0;
  margin-left: 4px;
  border-left: 4px solid transparent;
  border-right: 4px solid transparent;
  border-top: 6px solid #aaa;
}

/* sheet */
.sheet {
  flex: 1;
  min-height: 0;
  overflow: hidden;
  background: #fff;
}
.grid {
  display: grid;
  grid-template-columns: 22px repeat(39, 65px);
  grid-template-rows: 21px;
  grid-auto-rows: 13px;
}
.corner,
.colh,
.rowh {
  background: #171717;
  color: #eee;
  display: flex;
  align-items: center;
  justify-content: center;
  font-family: "Liberation Sans", sans-serif;
}
.corner {
  border-bottom: 1px solid #aaa;
  background: linear-gradient(135deg, #171717 52%, #4c4c4c 52%);
  background-size: 17px 17px;
  background-repeat: no-repeat;
  background-position: 2px 2px;
  background-color: #171717;
}
.colh {
  font-size: 10.500px;
  border-right: 1px solid #555;
  border-bottom: 1px solid #aaa;
}
.rowh {
  font-size: 10px;
  font-weight: 700;
  line-height: 12px;
}
.colh.sel,
.rowh.sel {
  background: #5a5a5a;
}
.cell {
  font: 700 10px/13px "Liberation Sans", sans-serif;
  color: #111;
  padding: 0 0 0 2px;
  overflow: hidden;
  white-space: nowrap;
  background: #fff;
  border-right: 1px solid #d0d0d0;
  border-bottom: 1px solid #d0d0d0;
}
.cell.num {
  text-align: right;
  padding-right: 2px;
}
.cell.br {
  border-right-color: #000;
}
.cell.bb {
  border-bottom-color: #000;
}
.cell.spill {
  overflow: visible;
  border-right-color: transparent;
  position: relative;
  z-index: 1;
  background: none;
}
.cell.flag {
  background: linear-gradient(135deg, #1e7145 3px, #fff 3px);
}
.cell.active {
  position: relative;
  overflow: visible;
  z-index: 2;
  box-shadow: inset 0 0 0 2px #1e7145;
  border-color: #1e7145;
}
.cell.active::after {
  content: "";
  position: absolute;
  right: -3px;
  bottom: -3px;
  width: 6px;
  height: 6px;
  background: #1e7145;
  border: 1px solid #fff;
}
.blue-fill { background: #0000ff; }
.green-fill { background: #0c6e14; }
.grey-fill { background: #b7b7b7; }
.yellow-fill { background: #ffff33; }
.red-fill { background: #ff1414; }
.orange-fill { background: #ff5c1c; }

/* sheet tabs */
.sheetbar {
  height: 27px;
  flex: none;
  display: flex;
  background: #2b2b2b;
  border-top: 1px solid #555;
  border-bottom: 1px solid #000;
}
.nav {
  width: 60px;
  display: flex;
  align-items: center;
  padding-left: 14px;
  gap: 15px;
}
.nav i {
  width: 0;
  height: 0;
  border-top: 5px solid transparent;
  border-bottom: 5px solid transparent;
}
.nav .left { border-right: 7px solid #666; }
.nav .right { border-left: 7px solid #666; }
.sheet-tab {
  width: 132px;
  height: 22px;
  background: #fff;
  color: #217346;
  border-radius: 0 0 3px 3px;
  font: 700 13px/21px "Liberation Sans", sans-serif;
  text-align: center;
}
.add {
  width: 38px;
  height: 21px;
  border-right: 1px solid #666;
  color: #ccc;
  font-size: 18px;
  line-height: 19px;
  text-align: center;
}

/* status bar */
.status {
  height: 21px;
  flex: none;
  display: flex;
  align-items: center;
  justify-content: flex-end;
  background: linear-gradient(90deg, #3e3e3e, #343434);
  padding-right: 24px;
  font-size: 12px;
}
.view {
  width: 36px;
  height: 21px;
  display: flex;
  align-items: center;
  justify-content: center;
}
.view.on {
  background: #555;
  width: 37px;
}
.zoom-btn {
  width: 8px;
  height: 2px;
  background: #fff;
  margin-left: 12px;
  position: relative;
}
.zoom-btn.plus::after {
  content: "";
  position: absolute;
  left: 3px;
  top: -3px;
  width: 2px;
  height: 8px;
  background: #fff;
}
.slider {
  width: 100px;
  height: 4px;
  border-radius: 2px;
  background: #888;
  margin-left: 7px;
  position: relative;
}
.slider i {
  position: absolute;
  left: 42px;
  top: -6px;
  width: 16px;
  height: 16px;
  border-radius: 50%;
  background: #9f9f9f;
}
.zoom-btn.plus {
  margin-left: 7px;
}
.pct-val {
  margin-left: 17px;
  color: #ddd;
}
```

FILE: script.js
```js
// Builds the worksheet: headers, cell text and the coloured schedule bars.
const NUM_COLS = 39;
const NUM_ROWS = 51;

const sheet = [
  ['S/O', 'Dealer', 'Model', 'Motor', 'Start Date', 'Color'],
  [1988, 'BEACH-BLVD', '180-CC', '1988', '2021-04-08', 'red'],
  [12345, 'ASHLEYS', '210-LXF', 'asdf', '2021-04-01', 'Blue'],
  [67823, '70-WEST', '280-CC', 'Yamaha', '2021-04-21', 'SKY BLUE'],
  [211474, 'BLUE-MARLIN', '180-CC', 'Yahmaha 350', '', 'Garnet'],
  [211495, 'ATLANTIC', '256-CC', 'Single Phase', '2021-04-07', 'Red'],
  [211500, 'BOATC-ITY', '272-CC', 'Yahmaha 350', '2021-04-29', 'White'],
  [211501, 'BLUE-WATER', '2110T-Bay', 'Yahmaha 350', '2021-05-07', 'Garnet'],
  [211502, 'RACETRACK', '2700-CB', 'Yahmaha', '2021-04-23', 'Baby Blue'],
  [211505, 'MUSKOKA', '232-LXF', 'Yahmaha', '2021-05-21', 'Baby Blue'],
  [252525, 'ROSE-MARINE', '198-CC', 'Yamaha', '2021-04-10', 'Blue']
];

// Row 1 from column G on
const stages = ['Prep', 'Gel', 'Skin', 'Bulk', 'Floor', 'Box', 'Pull', 'Grind', 'Cut', 'Patch',
  'Hardware', 'Cap', 'Foam', 'Con', 'MTR', 'Rig', 'Uph', 'C/C', 'Insp', 'Shipped'];

// [row, first column, last column, fill] with 0-based columns
const bars = [
  [2, 6, 22, 'blue'], [2, 23, 25, 'yellow'],
  [3, 6, 10, 'green'],
  [4, 6, 25, 'grey'],
  [5, 6, 14, 'yellow'],
  [6, 6, 7, 'blue'],
  [8, 6, 25, 'grey'],
  [11, 6, 16, 'grey']
];

// Legend in column AB
const legend = [['Monday', 'red'], ['Tuesday', 'blue'], ['Wednesday', 'green'],
  ['Thursday', 'yellow'], ['Friday', 'orange'], ['Weekend', 'grey']];
const LEGEND_COL = 27;

function colName(i) {
  const a = String.fromCharCode(65 + (i % 26));
  return i < 26 ? a : String.fromCharCode(64 + Math.floor(i / 26)) + a;
}

function fillOf(r, c) {
  for (const b of bars) {
    if (b[0] === r && c >= b[1] && c <= b[2]) return b[3];
  }
  if (c === LEGEND_COL && r >= 1 && r <= legend.length) return legend[r - 1][1];
  return null;
}

// Cells with a black box round them
function boxed(r, c) {
  if (r < 1) return false;
  if (r <= 11 && c <= 5) return true;
  if (r === 1 && c <= 25) return true;
  return fillOf(r, c) !== null;
}

function textOf(r, c) {
  if (r <= 11 && c <= 5) return sheet[r - 1][c];
  if (r === 1 && c >= 6 && c <= 25) return stages[c - 6];
  if (c === LEGEND_COL && r <= legend.length) return legend[r - 1][0];
  return '';
}

function add(parent, className, text) {
  const el = document.createElement('div');
  el.className = className;
  if (text !== undefined) el.textContent = text;
  parent.appendChild(el);
}

const grid = document.getElementById('grid');
add(grid, 'corner');
for (let c = 0; c < NUM_COLS; c++) {
  add(grid, c === 0 ? 'colh sel' : 'colh', colName(c));
}
for (let r = 1; r <= NUM_ROWS; r++) {
  add(grid, r === 1 ? 'rowh sel' : 'rowh', r);
  for (let c = 0; c < NUM_COLS; c++) {
    const text = textOf(r, c);
    const classes = ['cell'];
    const fill = fillOf(r, c);
    if (fill) classes.push(fill + '-fill');
    if (boxed(r, c) || boxed(r, c + 1)) classes.push('br');
    if (boxed(r, c) || boxed(r + 1, c)) classes.push('bb');
    if (typeof text === 'number') classes.push('num');
    if (r === 1 && c === 0) classes.push('active');
    if (r === 2 && c === 3) classes.push('flag');
    if (r === 5 && c === 3) classes.push('spill');
    add(grid, classes.join(' '), text);
  }
}
```
